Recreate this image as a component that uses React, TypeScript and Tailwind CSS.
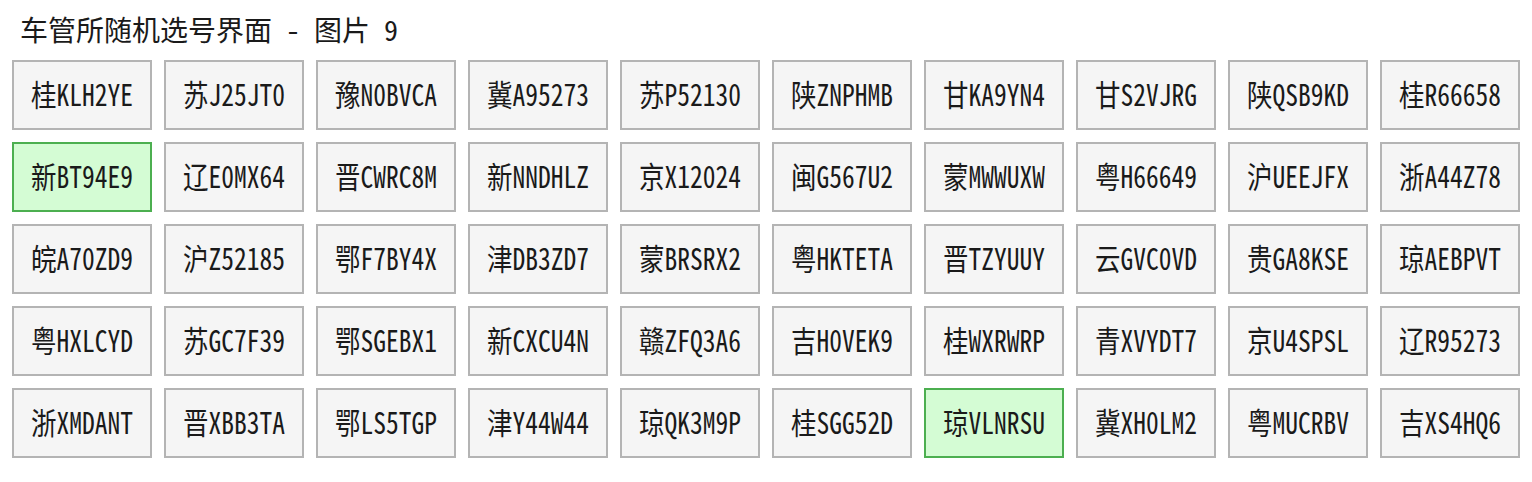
const plates = [
  "桂KLH2YE", "苏J25JT0", "豫N0BVCA", "冀A95273", "苏P52130", "陕ZNPHMB", "甘KA9YN4", "甘S2VJRG", "陕QSB9KD", "桂R66658",
  "新BT94E9", "辽E0MX64", "晋CWRC8M", "新NNDHLZ", "京X12024", "闽G567U2", "蒙MWWUXW", "粤H66649", "沪UEEJFX", "浙A44Z78",
  "皖A70ZD9", "沪Z52185", "鄂F7BY4X", "津DB3ZD7", "蒙BRSRX2", "粤HKTETA", "晋TZYUUY", "云GVC0VD", "贵GA8KSE", "琼AEBPVT",
  "粤HXLCYD", "苏GC7F39", "鄂SGEBX1", "新CXCU4N", "赣ZFQ3A6", "吉H0VEK9", "桂WXRWRP", "青XVYDT7", "京U4SPSL", "辽R95273",
  "浙XMDANT", "晋XBB3TA", "鄂LS5TGP", "津Y44W44", "琼QK3M9P", "桂SGG52D", "琼VLNRSU", "冀XH0LM2", "粤MUCRBV", "吉XS4HQ6",
];

const selected = new Set([10, 46]);

export default function App() {
  return (
    <div className="min-h-[482px] bg-white px-3 pt-3 pb-6 font-['Noto_Sans_Mono_CJK_SC','Noto_Sans_CJK_SC',monospace] text-[#1a1a1a]">
      <h1 className="pl-2 text-[28px] leading-[34px]">车管所随机选号界面 - 图片 9</h1>
      <div className="mt-[14px] grid grid-cols-10 gap-3">
        {plates.map((p, i) => (
          <button
            key={p + i}
            className={
              selected.has(i)
                ? "flex h-[70px] items-center justify-center border-2 border-[#4caf50] bg-[#d4fcd4] pb-[4px]"
                : "flex h-[70px] items-center justify-center border-2 border-[#b4b4b4] bg-[#f5f5f5] pb-[4px]"
            }
          >
            <span className="inline-block scale-x-[0.85] text-[30px] leading-none">{p}</span>
          </button>
        ))}
      </div>
    </div>
  );
}
